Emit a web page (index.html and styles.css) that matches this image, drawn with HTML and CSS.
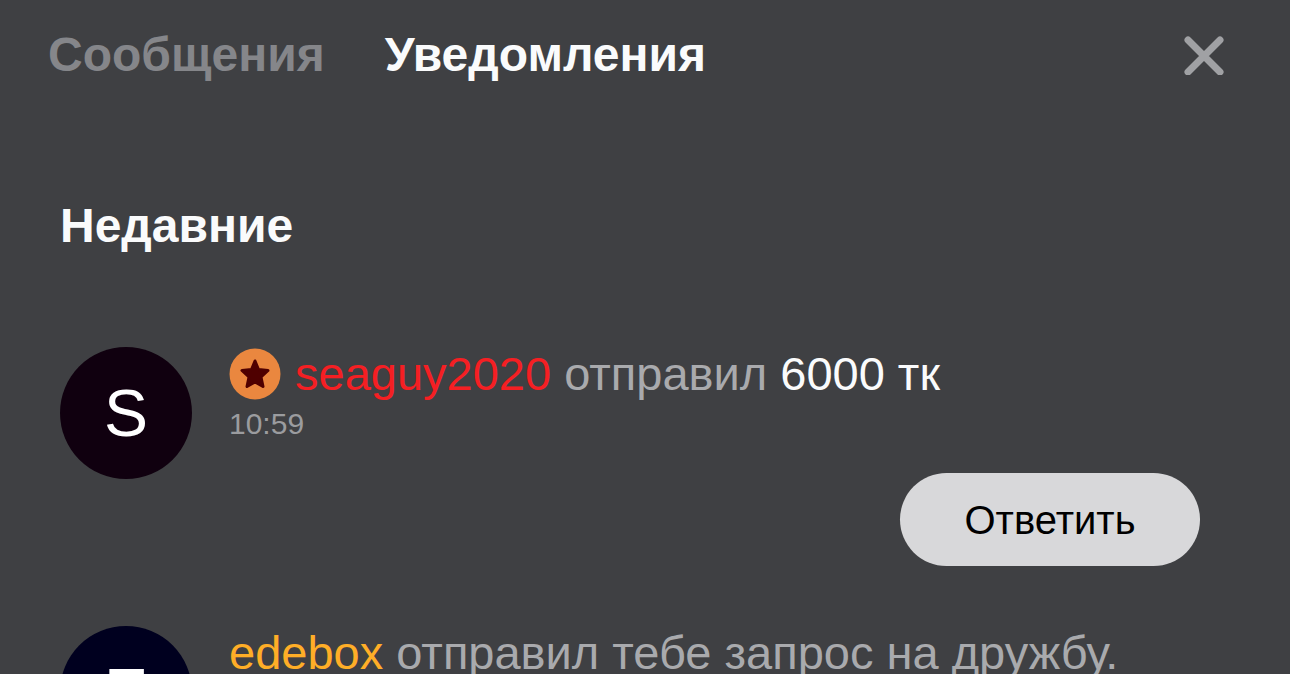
FILE: index.html
```html
<!DOCTYPE html>
<html lang="ru">
<head>
<meta charset="utf-8">
<meta name="viewport" content="width=device-width, initial-scale=1">
<title>Уведомления</title>
<link rel="stylesheet" href="styles.css">
</head>
<body>
<header class="header">
  <nav class="tabs">
    <button class="tab" type="button">Сообщения</button>
    <button class="tab tab-active" type="button">Уведомления</button>
  </nav>
  <button class="close" type="button" aria-label="Закрыть">
    <svg viewBox="0 0 40 40" aria-hidden="true"><path d="M4 5L36 37M36 5L4 37"/></svg>
  </button>
</header>
<main class="content">
  <h2 class="heading">Недавние</h2>
  <article class="notice">
    <div class="avatar avatar-s">S</div>
    <div class="body">
      <p class="message">
        <svg class="badge" viewBox="0 0 52 52" aria-hidden="true"><circle cx="26" cy="26" r="25.5"/><path d="M26 13L29.5 21.5L39 22.5L32 29L34 38.5L26 34L18 38.5L20 29L13 22.5L22.5 21.5Z"/></svg>
        <span><a class="user user-red" href="#">seaguy2020</a> отправил <strong class="amount">6000 тк</strong></span>
      </p>
      <time class="time">10:59</time>
      <button class="reply" type="button">Ответить</button>
    </div>
  </article>
  <article class="notice">
    <div class="avatar avatar-e">E</div>
    <div class="body">
      <p class="message"><span><a class="user user-orange" href="#">edebox</a> отправил тебе запрос на дружбу.</span></p>
    </div>
  </article>
</main>
</body>
</html>
```
FILE: styles.css
```css
* { box-sizing: border-box; }
body {
  margin: 0;
  height: 100vh;
  overflow: hidden;
  background: #3f4043;
  color: #a9aaad;
  font-family: "Liberation Sans", Arial, sans-serif;
}
button { border: 0; padding: 0; background: none; font-family: inherit; cursor: pointer; }
.header {
  display: flex;
  align-items: center;
  justify-content: space-between;
  padding: 28px 66px 0 48px;
}
.tabs { display: flex; gap: 60px; }
.tab { color: #85868a; font-size: 48px; line-height: 54px; font-weight: 700; }
.tab-active { color: #fafbfc; }
.close { width: 40px; height: 40px; }
.close svg { display: block; width: 40px; height: 40px; fill: none; stroke: #a0a1a4; stroke-width: 7; stroke-linecap: round; }
.content { padding: 116px 90px 0 60px; }
.heading { margin: 0 0 93px; color: #fafbfc; font-size: 48px; line-height: 56px; }
.notice { display: flex; gap: 37px; margin-bottom: 60px; }
.avatar {
  flex: none;
  display: grid;
  place-items: center;
  width: 132px;
  height: 132px;
  border-radius: 50%;
  color: #fff;
  font-size: 66px;
  line-height: 76px;
}
.avatar-s { background: #10000f; }
.avatar-e { background: #00001f; }
.body { flex: 1; display: flex; flex-direction: column; }
.message { display: flex; align-items: center; gap: 14px; margin: 0; font-size: 47px; line-height: 54px; white-space: nowrap; }
.badge { flex: none; width: 52px; height: 52px; }
.badge circle { fill: #ea873f; }
.badge path { fill: #4f0000; stroke: #4f0000; stroke-width: 3; stroke-linejoin: round; }
.user { text-decoration: none; }
.user-red { color: #f51f23; }
.user-orange { color: #ffae27; }
.amount { color: #fafbfc; font-weight: 400; }
.time { color: #9b9c9f; font-size: 30px; line-height: 46px; }
.reply {
  align-self: flex-end;
  width: 300px;
  height: 93px;
  margin-top: 26px;
  border-radius: 47px;
  background: #d8d8da;
  color: #000;
  font-size: 40px;
  line-height: 46px;
}
```
